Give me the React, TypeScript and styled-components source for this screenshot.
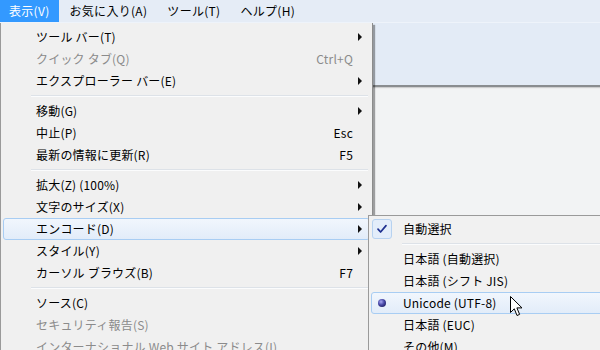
import * as React from "react";
import styled, { createGlobalStyle } from "styled-components";

const GlobalStyle = createGlobalStyle`
  html, body { margin: 0; padding: 0; }
  body {
    font-family: "Noto Sans CJK JP", "Noto Sans", sans-serif;
    font-size: 12px;
    color: #000;
  }
`;

type Entry =
  | { kind: "sep" }
  | {
      kind: "item";
      label: string;
      shortcut?: string;
      sub?: boolean;
      disabled?: boolean;
      active?: boolean;
      mark?: "check" | "dot";
    };

const mainItems: Entry[] = [
  { kind: "item", label: "ツール バー(T)", sub: true },
  { kind: "item", label: "クイック タブ(Q)", shortcut: "Ctrl+Q", disabled: true },
  { kind: "item", label: "エクスプローラー バー(E)", sub: true },
  { kind: "sep" },
  { kind: "item", label: "移動(G)", sub: true },
  { kind: "item", label: "中止(P)", shortcut: "Esc" },
  { kind: "item", label: "最新の情報に更新(R)", shortcut: "F5" },
  { kind: "sep" },
  { kind: "item", label: "拡大(Z) (100%)", sub: true },
  { kind: "item", label: "文字のサイズ(X)", sub: true },
  { kind: "item", label: "エンコード(D)", sub: true, active: true },
  { kind: "item", label: "スタイル(Y)", sub: true },
  { kind: "item", label: "カーソル ブラウズ(B)", shortcut: "F7" },
  { kind: "sep" },
  { kind: "item", label: "ソース(C)" },
  { kind: "item", label: "セキュリティ報告(S)", disabled: true },
  { kind: "item", label: "インターナショナル Web サイト アドレス(I)", disabled: true },
];

const encodeItems: Entry[] = [
  { kind: "item", label: "自動選択", mark: "check" },
  { kind: "sep" },
  { kind: "item", label: "日本語 (自動選択)" },
  { kind: "item", label: "日本語 (シフト JIS)" },
  { kind: "item", label: "Unicode (UTF-8)", mark: "dot", active: true },
  { kind: "item", label: "日本語 (EUC)" },
  { kind: "item", label: "その他(M)" },
];

export default function App() {
  return (
    <>
      <GlobalStyle />
      <Screen>
        <MenuBar>
          <BarItem $open>表示(V)</BarItem>
          <BarItem>お気に入り(A)</BarItem>
          <BarItem>ツール(T)</BarItem>
          <BarItem>ヘルプ(H)</BarItem>
        </MenuBar>
        <ToolBand />

        <DropMenu>
          {mainItems.map((e, i) =>
            e.kind === "sep" ? (
              <Separator key={i} />
            ) : (
              <Item key={i} $active={e.active} $disabled={e.disabled}>
                <Label>{e.label}</Label>
                {e.shortcut && <Shortcut>{e.shortcut}</Shortcut>}
                <Trailing>{e.sub && <Arrow />}</Trailing>
              </Item>
            )
          )}
        </DropMenu>

        <SubMenu>
          {encodeItems.map((e, i) =>
            e.kind === "sep" ? (
              <SubSeparator key={i} />
            ) : (
              <SubItem key={i} $active={e.active}>
                <MarkBox $boxed={e.mark === "check"}>
                  {e.mark === "check" && (
                    <svg width="12" height="12" viewBox="0 0 12 12">
                      <path
                        d="M2 6.2 L4.6 9 L10 2.6"
                        fill="none"
                        stroke="#1d2f8f"
                        strokeWidth="1.7"
                        strokeLinecap="round"
                        strokeLinejoin="round"
                      />
                    </svg>
                  )}
                  {e.mark === "dot" && (
                    <svg width="10" height="10" viewBox="0 0 10 10">
                      <defs>
                        <radialGradient id="dotg" cx="0.38" cy="0.35" r="0.7">
                          <stop offset="0" stopColor="#a9a9f2" />
                          <stop offset="0.55" stopColor="#4a4aa8" />
                          <stop offset="1" stopColor="#25256a" />
                        </radialGradient>
                      </defs>
                      <circle cx="5" cy="5" r="4" fill="url(#dotg)" />
                    </svg>
                  )}
                </MarkBox>
                <Label>{e.label}</Label>
              </SubItem>
            )
          )}
        </SubMenu>

        <Pointer width="13" height="22" viewBox="0 0 13 22">
          <path
            d="M0.5 0.5 L0.5 16.5 L4.3 12.8 L7 19.5 L9.6 18.4 L6.9 11.9 L12 11.9 Z"
            fill="#fff"
            stroke="#000"
            strokeWidth="1"
            strokeLinejoin="miter"
          />
        </Pointer>
      </Screen>
    </>
  );
}

const Screen = styled.div`
  position: relative;
  width: 600px;
  height: 350px;
  overflow: hidden;
  background: #f2f3f4;
  display: flex;
  flex-direction: column;
`;

const MenuBar = styled.div`
  height: 23px;
  display: flex;
  align-items: stretch;
  gap: 2px;
  background: #e5ecf6;
  border-bottom: 1px solid #eef3fa;
  box-sizing: border-box;
`;

const BarItem = styled.div<{ $open?: boolean }>`
  display: flex;
  align-items: center;
  padding: 0 9px;
  background: ${(p) => (p.$open ? "#3399ff" : "transparent")};
  color: ${(p) => (p.$open ? "#fff" : "#000")};
  line-height: 1;
  letter-spacing: 0.3px;
`;

const ToolBand = styled.div`
  height: 62px;
  background: #e3ebf6;
  border-bottom: 2px solid #8a8d90;
  box-shadow: 0 1px 1px rgba(0, 0, 0, 0.15);
`;

const DropMenu = styled.div`
  position: absolute;
  left: 0;
  top: 23px;
  width: 373px;
  height: 340px;
  box-sizing: border-box;
  padding: 3px 2px;
  background: #f0f0f0;
  border-left: 1px solid #9a9a9a;
  border-right: 1px solid #8c8c8c;
  box-shadow: 2px 2px 1px rgba(0, 0, 0, 0.35);
  display: flex;
  flex-direction: column;
`;

const Item = styled.div<{ $active?: boolean; $disabled?: boolean }>`
  height: 22px;
  box-sizing: border-box;
  display: flex;
  align-items: center;
  padding-left: 32px;
  border: 1px solid ${(p) => (p.$active ? "#a8cdf3" : "transparent")};
  border-radius: 3px;
  background: ${(p) =>
    p.$active ? "linear-gradient(#f1f6fd, #e2ecf9)" : "transparent"};
  color: ${(p) => (p.$disabled ? "#8b8b8b" : "#000")};
  white-space: nowrap;
`;

const Label = styled.span`
  flex: 1;
  line-height: 1;
  letter-spacing: 0.2px;
`;

const Shortcut = styled.span`
  line-height: 1;
  letter-spacing: 0.2px;
`;

const Trailing = styled.span`
  width: 16px;
  height: 100%;
  display: flex;
  align-items: center;
  padding-left: 5px;
  box-sizing: border-box;
`;

const Arrow = styled.span`
  width: 0;
  height: 0;
  border-top: 4px solid transparent;
  border-bottom: 4px solid transparent;
  border-left: 4px solid #111;
`;

const Separator = styled.div`
  height: 8px;
  margin-left: 28px;
  margin-right: 2px;
  display: flex;
  flex-direction: column;
  justify-content: center;
  &::before {
    content: "";
    height: 1px;
    background: #dde2e8;
  }
  &::after {
    content: "";
    height: 1px;
    background: #fbfcfd;
  }
`;

const SubMenu = styled.div`
  position: absolute;
  left: 368px;
  top: 215px;
  width: 260px;
  height: 160px;
  box-sizing: border-box;
  padding: 2px 2px;
  background: #f1f1f1;
  border-left: 1px solid #9a9a9a;
  border-top: 1px solid #9a9a9a;
  display: flex;
  flex-direction: column;
`;

const SubItem = styled.div<{ $active?: boolean }>`
  height: 22px;
  box-sizing: border-box;
  display: flex;
  align-items: center;
  border: 1px solid ${(p) => (p.$active ? "#a8cdf3" : "transparent")};
  border-radius: 3px;
  background: ${(p) =>
    p.$active ? "linear-gradient(#f1f6fd, #e2ecf9)" : "transparent"};
  white-space: nowrap;
`;

const MarkBox = styled.span<{ $boxed?: boolean }>`
  width: 20px;
  height: 20px;
  box-sizing: border-box;
  margin-right: 11px;
  display: flex;
  align-items: center;
  justify-content: center;
  border: 1px solid ${(p) => (p.$boxed ? "#b7d2f0" : "transparent")};
  border-radius: 3px;
  background: ${(p) => (p.$boxed ? "#e3edfa" : "transparent")};
`;

const SubSeparator = styled(Separator)`
  margin-left: 31px;
  margin-right: 0;
`;

const Pointer = styled.svg`
  position: absolute;
  left: 510px;
  top: 296px;
`;
